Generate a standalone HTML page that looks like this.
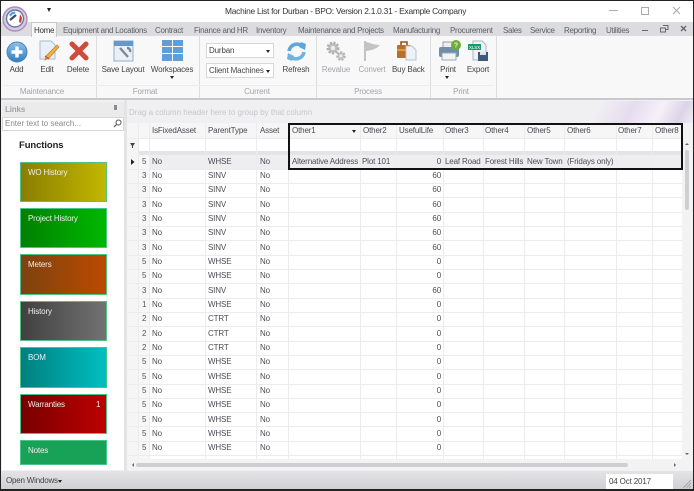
<!DOCTYPE html>
<html><head><meta charset="utf-8"><title>Machine List</title>
<style>
html,body{margin:0;padding:0}
html{background:#f1f1f3}
body{width:694px;height:491px;overflow:hidden;position:relative;background:#f1f1f3;font-family:"Liberation Sans",sans-serif;font-size:8px;color:#4a4a50;letter-spacing:-.15px;filter:blur(.35px)}
div,span,svg{position:absolute;white-space:nowrap}
.tab{top:24px;line-height:13px;color:#5b6068;font-size:8px;letter-spacing:-.28px}
.lb{top:64px;line-height:11px;text-align:center;color:#444;font-size:8px}
.dis{color:#a5a5a8}
.gl{top:86px;line-height:12px;color:#a3a3a8;text-align:center;font-size:8px}
.sep{top:36px;width:1px;height:62px;background:#dcdde0}
.hd{top:124px;line-height:14px;color:#4b4b50}
.vl{width:1px;background:#ececec;top:123px;height:336px}
.hl{left:127px;width:555px;height:1px;background:#ececec}
.r{left:0;width:694px;height:14px;line-height:14px;color:#4d4d55}
.r span{top:0}
.a{left:142px;color:#555}.b{left:152px}.c{left:208px}.d{left:260px}
.e{left:396px;width:45px;text-align:right}
.t{left:20px;width:87px;color:#e8e8e8;border:1px solid #4cc488;box-sizing:border-box;font-size:8px}
.t span{left:7px;top:4px;line-height:11px;color:#eee}
.dd{left:206px;width:68px;height:15px;background:#fff;border:1px solid #d8d8dc;box-sizing:border-box;line-height:13px;color:#444}
.ar{width:0;height:0;border-left:2px solid transparent;border-right:2px solid transparent;border-top:3px solid #222}
</style></head><body>
<!-- frame -->
<div style="left:0;top:0;width:694px;height:22px;background:#fff"></div>
<div style="left:0;top:22px;width:694px;height:14px;background:#dcdcdf"></div>
<div style="left:0;top:36px;width:694px;height:62px;background:#f8f8f9"></div>
<div style="left:0;top:98px;width:694px;height:2px;background:#c9c9cd"></div>
<div style="left:225px;top:5px;line-height:12px;font-size:8.4px;color:#333;letter-spacing:-.25px">Machine List for Durban - BPO: Version 2.1.0.31 - Example Company</div>
<!-- logo -->
<svg style="left:2px;top:6px" width="26" height="26" viewBox="0 0 26 26"><circle cx="13" cy="13" r="12" fill="#d9c9e2" stroke="#a98fbd" stroke-width="1.4"/><circle cx="13" cy="12.5" r="8.5" fill="#fff" stroke="#5f7ea6" stroke-width="1.4"/><path d="M8 14L14 9" stroke="#34506f" stroke-width="2.2"/><path d="M18 8l2 4-1 5-2-1z" fill="#cc3a2c"/><path d="M7 9l3-3 3-.5.3 2-3 1-1.5 2z" fill="#5b9bd5"/></svg>
<div class="ar" style="left:47px;top:8px;border-left-width:2.5px;border-right-width:2.5px;border-top-width:4px"></div>
<!-- window buttons -->
<div style="left:609px;top:10px;width:9px;height:1px;background:#aaa"></div>
<div style="left:641px;top:7px;width:6px;height:6px;border:1px solid #aaa"></div>
<svg style="left:672px;top:6px" width="10" height="10"><path d="M1 1l7 7M8 1L1 8" stroke="#aaa" stroke-width="1"/></svg>
<!-- tabs -->
<div style="left:31px;top:22px;width:26px;height:15px;background:#f8f8f9;border:1px solid #c9c9cd;border-bottom:0;box-sizing:border-box"></div>
<div class="tab" style="left:34px;color:#333">Home</div>
<div class="tab" style="left:63px">Equipment and Locations</div>
<div class="tab" style="left:155px">Contract</div>
<div class="tab" style="left:194px">Finance and HR</div>
<div class="tab" style="left:256px">Inventory</div>
<div class="tab" style="left:298px">Maintenance and Projects</div>
<div class="tab" style="left:393px">Manufacturing</div>
<div class="tab" style="left:450px">Procurement</div>
<div class="tab" style="left:503px">Sales</div>
<div class="tab" style="left:530px">Service</div>
<div class="tab" style="left:564px">Reporting</div>
<div class="tab" style="left:606px">Utilities</div>
<div style="left:642px;top:30px;width:6px;height:1px;background:#667"></div>
<svg style="left:660px;top:25px" width="9" height="8"><path d="M3 .5h5v4H6M.5 3h5v4h-5z" fill="none" stroke="#667"/></svg>
<svg style="left:680px;top:25px" width="8" height="8"><path d="M1 1l5 5M6 1L1 6" stroke="#667" stroke-width="1.4"/></svg>
<!-- ribbon separators -->
<div class="sep" style="left:96px"></div><div class="sep" style="left:199px"></div><div class="sep" style="left:316px"></div><div class="sep" style="left:430px"></div><div class="sep" style="left:496px"></div>
<div style="left:4px;top:85px;width:490px;height:1px;background:#ececee"></div>
<!-- ribbon icons -->
<svg style="left:6px;top:41px" width="22" height="22" viewBox="0 0 22 22"><defs><linearGradient id="b1" x1="0" y1="0" x2="0" y2="1"><stop offset="0" stop-color="#8fc0e8"/><stop offset="1" stop-color="#2f7fc4"/></linearGradient></defs><circle cx="11" cy="11" r="10" fill="url(#b1)" stroke="#4a84b8"/><path d="M11 5.5v11M5.5 11h11" stroke="#fff" stroke-width="3.4"/></svg>
<svg style="left:38px;top:39px" width="22" height="24" viewBox="0 0 22 24"><path d="M2 2h11l4 4v14H2z" fill="#e8eff7" stroke="#a9bdd2"/><path d="M19 6l2 2-10 11-4 2 1-4z" fill="#eeb23d" stroke="#c5762c" stroke-width=".7"/><path d="M7 17l4 3" stroke="#c33" stroke-width="1"/></svg>
<svg style="left:69px;top:41px" width="20" height="20" viewBox="0 0 20 20"><path d="M3 3l14 14M17 3L3 17" stroke="#cf4c3c" stroke-width="5" stroke-linecap="round"/></svg>
<svg style="left:113px;top:40px" width="22" height="22" viewBox="0 0 22 22"><rect x="1" y="1" width="19" height="20" fill="#eaf0f6" stroke="#8fb0cf"/><rect x="1" y="1" width="19" height="5" fill="#5d9bd2"/><path d="M7 8l8 9M14 8a3 3 0 0 1 3 4" stroke="#7d8894" stroke-width="2.4" fill="none"/></svg>
<svg style="left:162px;top:40px" width="21" height="21" viewBox="0 0 21 21"><g fill="#5f9fd6"><rect x="0" y="0" width="10" height="6"/><rect x="11" y="0" width="10" height="6"/><rect x="0" y="7" width="10" height="6"/><rect x="11" y="7" width="10" height="6"/><rect x="0" y="14" width="10" height="7"/><rect x="11" y="14" width="10" height="7"/></g></svg>
<svg style="left:285px;top:41px" width="23" height="21" viewBox="0 0 23 21"><path d="M4 10a8 8 0 0 1 14-4" fill="none" stroke="#5ea6dc" stroke-width="3.6"/><path d="M16 1l5 2-1 6-6-3z" fill="#5ea6dc"/><path d="M19 11a8 8 0 0 1-14 4" fill="none" stroke="#6fb3e4" stroke-width="3.6"/><path d="M7 20l-5-2 1-6 6 3z" fill="#6fb3e4"/></svg>
<svg style="left:325px;top:40px" width="22" height="22" viewBox="0 0 22 22"><circle cx="8" cy="8" r="5" fill="#c2c2c2" stroke="#b0b0b0" stroke-width="3" stroke-dasharray="2 1.4"/><circle cx="8" cy="8" r="2" fill="#eee"/><circle cx="16" cy="16" r="3.6" fill="#c8c8c8" stroke="#b5b5b5" stroke-width="2.4" stroke-dasharray="2 1.2"/><circle cx="16" cy="16" r="1.4" fill="#eee"/></svg>
<svg style="left:362px;top:40px" width="22" height="22" viewBox="0 0 22 22"><path d="M3 1v20" stroke="#b5b5b5" stroke-width="1.6"/><path d="M4 2c5 1 8 3 14 3-3 3-6 5-14 6z" fill="#c3c3c3"/></svg>
<svg style="left:396px;top:39px" width="22" height="22" viewBox="0 0 22 22"><rect x="1" y="6" width="14" height="13" rx="1" fill="#b5702e"/><path d="M5 6V3h6v3" fill="none" stroke="#8d5522" stroke-width="1.6"/><rect x="1" y="10" width="14" height="2" fill="#e19a3c"/><path d="M10 7h6l4 4v10H10z" fill="#eef1f6" stroke="#b9c4d2"/></svg>
<svg style="left:438px;top:39px" width="24" height="23" viewBox="0 0 24 23"><rect x="5" y="3" width="12" height="6" fill="#eee" stroke="#99a"/><rect x="1" y="8" width="20" height="10" rx="2" fill="#6f8ea8"/><rect x="4" y="14" width="14" height="7" fill="#f3f3f3" stroke="#9ab"/><circle cx="18" cy="6" r="5" fill="#6bae2f"/><text x="18" y="8.5" font-size="7" font-weight="bold" fill="#eef" text-anchor="middle" font-family="Liberation Sans">?</text></svg>
<svg style="left:467px;top:40px" width="22" height="22" viewBox="0 0 22 22"><path d="M6 1h9l4 4v15H6z" fill="#eef1f6" stroke="#aab6c6"/><rect x="1" y="4" width="13" height="6" fill="#1e9a6a"/><text x="7.5" y="9" font-size="4.5" fill="#fff" text-anchor="middle" font-family="Liberation Sans">XLSX</text><rect x="11" y="12" width="10" height="9" fill="#3d5a78"/><rect x="13" y="12" width="6" height="3" fill="#dfe6ee"/></svg>
<!-- ribbon labels -->
<div class="lb" style="left:6px;width:21px">Add</div>
<div class="lb" style="left:36px;width:22px">Edit</div>
<div class="lb" style="left:65px;width:26px">Delete</div>
<div class="lb" style="left:100px;width:46px">Save Layout</div>
<div class="lb" style="left:150px;width:44px">Workspaces</div>
<div class="ar" style="left:170px;top:76px"></div>
<div class="lb" style="left:281px;width:30px">Refresh</div>
<div class="lb dis" style="left:321px;width:30px">Revalue</div>
<div class="lb dis" style="left:357px;width:30px">Convert</div>
<div class="lb" style="left:392px;width:32px">Buy Back</div>
<div class="lb" style="left:437px;width:22px">Print</div>
<div class="ar" style="left:445px;top:76px"></div>
<div class="lb" style="left:465px;width:26px">Export</div>
<div class="gl" style="left:4px;width:76px">Maintenance</div>
<div class="gl" style="left:120px;width:50px">Format</div>
<div class="gl" style="left:232px;width:50px">Current</div>
<div class="gl" style="left:345px;width:46px">Process</div>
<div class="gl" style="left:446px;width:30px">Print</div>
<!-- dropdowns -->
<div class="dd" style="top:43px"><span style="left:2px;top:0">Durban</span><div class="ar" style="left:59px;top:6px"></div></div>
<div class="dd" style="top:63px"><span style="left:2px;top:0">Client Machines</span><div class="ar" style="left:59px;top:6px"></div></div>
<!-- left panel -->
<div style="left:2px;top:102px;width:122px;height:16px;background:#ebebec"></div>
<div style="left:5px;top:104px;line-height:11px;font-weight:bold;color:#a3a3a8;font-size:8px">Links</div>
<div style="left:114px;top:105px;width:3px;height:5px;background:#8a8a90"></div>
<div style="left:2px;top:117px;width:122px;height:14px;background:#fff;border:1px solid #d6d6d8;box-sizing:border-box"></div>
<div style="left:5px;top:118px;line-height:12px;color:#888;letter-spacing:0">Enter text to search...</div>
<svg style="left:113px;top:119px" width="9" height="9"><circle cx="5.5" cy="3.5" r="2.5" fill="none" stroke="#555"/><path d="M3.5 5.5L1 8" stroke="#555" stroke-width="1.2"/></svg>
<div style="left:2px;top:131px;width:122px;height:339px;background:#fff"></div>
<div style="left:19px;top:140px;line-height:12px;font-size:9.5px;font-weight:bold;color:#222;letter-spacing:-.1px">Functions</div>
<div class="t" style="top:162px;height:40px;background:linear-gradient(90deg,#8a7d00,#c2b800)"><span>WO History</span></div>
<div class="t" style="top:208px;height:40px;background:linear-gradient(90deg,#008000,#00b800)"><span>Project History</span></div>
<div class="t" style="top:254px;height:41px;background:linear-gradient(90deg,#7d4210,#bc4a00)"><span>Meters</span></div>
<div class="t" style="top:301px;height:40px;background:linear-gradient(90deg,#404040,#727272)"><span>History</span></div>
<div class="t" style="top:347px;height:41px;background:linear-gradient(90deg,#007f80,#00bfc0)"><span>BOM</span></div>
<div class="t" style="top:394px;height:40px;background:linear-gradient(90deg,#780000,#be0000)"><span>Warranties</span><span style="left:75px">1</span></div>
<div class="t" style="top:440px;height:25px;background:#17a257"><span>Notes</span></div>
<!-- grid panel -->
<div style="left:124px;top:100px;width:3px;height:371px;background:#e4e4e6"></div>
<div style="left:127px;top:101px;width:567px;height:22px;background:linear-gradient(118deg,#f0f0f2 82%,#e6dcef 88%,#f5f1f8 93%,#ddd3e9 97%,#f0f0f2)"></div>
<div style="left:129px;top:107px;line-height:11px;color:#c6c6ca;letter-spacing:0">Drag a column header here to group by that column</div>
<div style="left:127px;top:123px;width:555px;height:336px;background:#fff"></div>
<div style="left:127px;top:123px;width:555px;height:15px;background:#f6f6f7"></div>
<div style="left:127px;top:151px;width:555px;height:4px;background:#e4e4e6"></div>
<div style="left:127px;top:155px;width:555px;height:14px;background:#eeeef0"></div>
<div style="left:127px;top:138px;width:11px;height:321px;background:#f5f5f6"></div>
<div style="left:138px;top:155px;width:11px;height:304px;background:#f7f7f8"></div>
<div class="hl" style="top:138px"></div>
<div class="hl" style="top:169px"></div><div class="hl" style="top:183px"></div><div class="hl" style="top:197px"></div><div class="hl" style="top:212px"></div><div class="hl" style="top:226px"></div><div class="hl" style="top:240px"></div><div class="hl" style="top:255px"></div><div class="hl" style="top:269px"></div><div class="hl" style="top:283px"></div><div class="hl" style="top:298px"></div><div class="hl" style="top:312px"></div><div class="hl" style="top:326px"></div><div class="hl" style="top:341px"></div><div class="hl" style="top:355px"></div><div class="hl" style="top:369px"></div><div class="hl" style="top:384px"></div><div class="hl" style="top:398px"></div><div class="hl" style="top:412px"></div><div class="hl" style="top:426px"></div><div class="hl" style="top:441px"></div><div class="hl" style="top:455px"></div>
<div class="vl" style="left:138px"></div><div class="vl" style="left:149px"></div><div class="vl" style="left:205px"></div><div class="vl" style="left:256px"></div><div class="vl" style="left:288px"></div><div class="vl" style="left:360px"></div><div class="vl" style="left:396px"></div><div class="vl" style="left:443px"></div><div class="vl" style="left:483px"></div><div class="vl" style="left:524px"></div><div class="vl" style="left:564px"></div><div class="vl" style="left:616px"></div><div class="vl" style="left:652px"></div>
<!-- headers -->
<div class="hd" style="left:152px">IsFixedAsset</div>
<div class="hd" style="left:208px">ParentType</div>
<div class="hd" style="left:260px">Asset</div>
<div class="hd" style="left:292px">Other1</div>
<div class="ar" style="left:352px;top:130px"></div>
<div class="hd" style="left:363px">Other2</div>
<div class="hd" style="left:399px">UsefulLife</div>
<div class="hd" style="left:445px">Other3</div>
<div class="hd" style="left:485px">Other4</div>
<div class="hd" style="left:527px">Other5</div>
<div class="hd" style="left:567px">Other6</div>
<div class="hd" style="left:618px">Other7</div>
<div class="hd" style="left:655px">Other8</div>
<svg style="left:130px;top:143px" width="6" height="6"><path d="M0 0h5L3 3v2H2V3z" fill="#444"/></svg>
<svg style="left:131px;top:159px" width="4" height="6"><path d="M0 0l3.5 3L0 6z" fill="#222"/></svg>
<!-- rows -->
<div class="r" style="top:155px"><span class="a">5</span><span class="b">No</span><span class="c">WHSE</span><span class="d">No</span><span style="left:292px">Alternative Address</span><span style="left:362px">Plot 101</span><span class="e">0</span><span style="left:445px">Leaf Road</span><span style="left:485px">Forest Hills</span><span style="left:527px">New Town</span><span style="left:567px">(Fridays only)</span></div>
<div class="r" style="top:169px"><span class="a">3</span><span class="b">No</span><span class="c">SINV</span><span class="d">No</span><span class="e">60</span></div>
<div class="r" style="top:183px"><span class="a">3</span><span class="b">No</span><span class="c">SINV</span><span class="d">No</span><span class="e">60</span></div>
<div class="r" style="top:198px"><span class="a">3</span><span class="b">No</span><span class="c">SINV</span><span class="d">No</span><span class="e">60</span></div>
<div class="r" style="top:212px"><span class="a">3</span><span class="b">No</span><span class="c">SINV</span><span class="d">No</span><span class="e">60</span></div>
<div class="r" style="top:226px"><span class="a">3</span><span class="b">No</span><span class="c">SINV</span><span class="d">No</span><span class="e">60</span></div>
<div class="r" style="top:241px"><span class="a">3</span><span class="b">No</span><span class="c">SINV</span><span class="d">No</span><span class="e">60</span></div>
<div class="r" style="top:255px"><span class="a">5</span><span class="b">No</span><span class="c">WHSE</span><span class="d">No</span><span class="e">0</span></div>
<div class="r" style="top:269px"><span class="a">5</span><span class="b">No</span><span class="c">WHSE</span><span class="d">No</span><span class="e">0</span></div>
<div class="r" style="top:284px"><span class="a">3</span><span class="b">No</span><span class="c">SINV</span><span class="d">No</span><span class="e">60</span></div>
<div class="r" style="top:298px"><span class="a">1</span><span class="b">No</span><span class="c">WHSE</span><span class="d">No</span><span class="e">0</span></div>
<div class="r" style="top:312px"><span class="a">2</span><span class="b">No</span><span class="c">CTRT</span><span class="d">No</span><span class="e">0</span></div>
<div class="r" style="top:327px"><span class="a">2</span><span class="b">No</span><span class="c">CTRT</span><span class="d">No</span><span class="e">0</span></div>
<div class="r" style="top:341px"><span class="a">2</span><span class="b">No</span><span class="c">CTRT</span><span class="d">No</span><span class="e">0</span></div>
<div class="r" style="top:355px"><span class="a">5</span><span class="b">No</span><span class="c">WHSE</span><span class="d">No</span><span class="e">0</span></div>
<div class="r" style="top:370px"><span class="a">5</span><span class="b">No</span><span class="c">WHSE</span><span class="d">No</span><span class="e">0</span></div>
<div class="r" style="top:384px"><span class="a">5</span><span class="b">No</span><span class="c">WHSE</span><span class="d">No</span><span class="e">0</span></div>
<div class="r" style="top:398px"><span class="a">5</span><span class="b">No</span><span class="c">WHSE</span><span class="d">No</span><span class="e">0</span></div>
<div class="r" style="top:413px"><span class="a">5</span><span class="b">No</span><span class="c">WHSE</span><span class="d">No</span><span class="e">0</span></div>
<div class="r" style="top:427px"><span class="a">5</span><span class="b">No</span><span class="c">WHSE</span><span class="d">No</span><span class="e">0</span></div>
<div class="r" style="top:441px"><span class="a">5</span><span class="b">No</span><span class="c">WHSE</span><span class="d">No</span><span class="e">0</span></div>
<!-- scrollbars -->
<div style="left:682px;top:123px;width:10px;height:347px;background:#f3f3f4"></div>
<div style="left:685px;top:150px;width:4px;height:60px;background:#cfcfd3;border-radius:2px"></div>
<div style="left:685px;top:143px;width:0;height:0;border-left:2px solid transparent;border-right:2px solid transparent;border-bottom:2px solid #666"></div>
<div style="left:685px;top:453px;width:0;height:0;border-left:2px solid transparent;border-right:2px solid transparent;border-top:2px solid #666"></div>
<div style="left:127px;top:459px;width:565px;height:11px;background:#f3f3f4"></div>
<div style="left:136px;top:463px;width:492px;height:4px;background:#cfcfd3;border-radius:2px"></div>
<div style="left:132px;top:463px;width:0;height:0;border-top:2px solid transparent;border-bottom:2px solid transparent;border-right:2px solid #666"></div>
<div style="left:674px;top:463px;width:0;height:0;border-top:2px solid transparent;border-bottom:2px solid transparent;border-left:2px solid #666"></div>
<!-- highlight box -->
<div style="left:288px;top:123px;width:395px;height:47px;border:2px solid #111;box-sizing:border-box"></div>
<!-- status bar -->
<div style="left:0;top:471px;width:694px;height:19px;background:linear-gradient(#e4e4e7,#cfcfd3)"></div>
<div style="left:6px;top:475px;line-height:12px;color:#444;font-size:8px;letter-spacing:-.2px">Open Windows</div>
<div class="ar" style="left:58px;top:480px"></div>
<div style="left:606px;top:474px;width:67px;height:15px;background:#fff"></div>
<div style="left:609px;top:475px;line-height:13px;color:#444;font-size:8px;letter-spacing:-.15px">04 Oct 2017</div>
<svg style="left:682px;top:479px" width="10" height="10"><path d="M9 1L1 9M9 4L4 9M9 7L7 9" stroke="#aaa"/></svg>
<!-- outer border -->
<div style="left:0;top:0;width:694px;height:491px;border:1px solid #222;border-bottom-width:2px;box-sizing:border-box"></div>
</body></html>
